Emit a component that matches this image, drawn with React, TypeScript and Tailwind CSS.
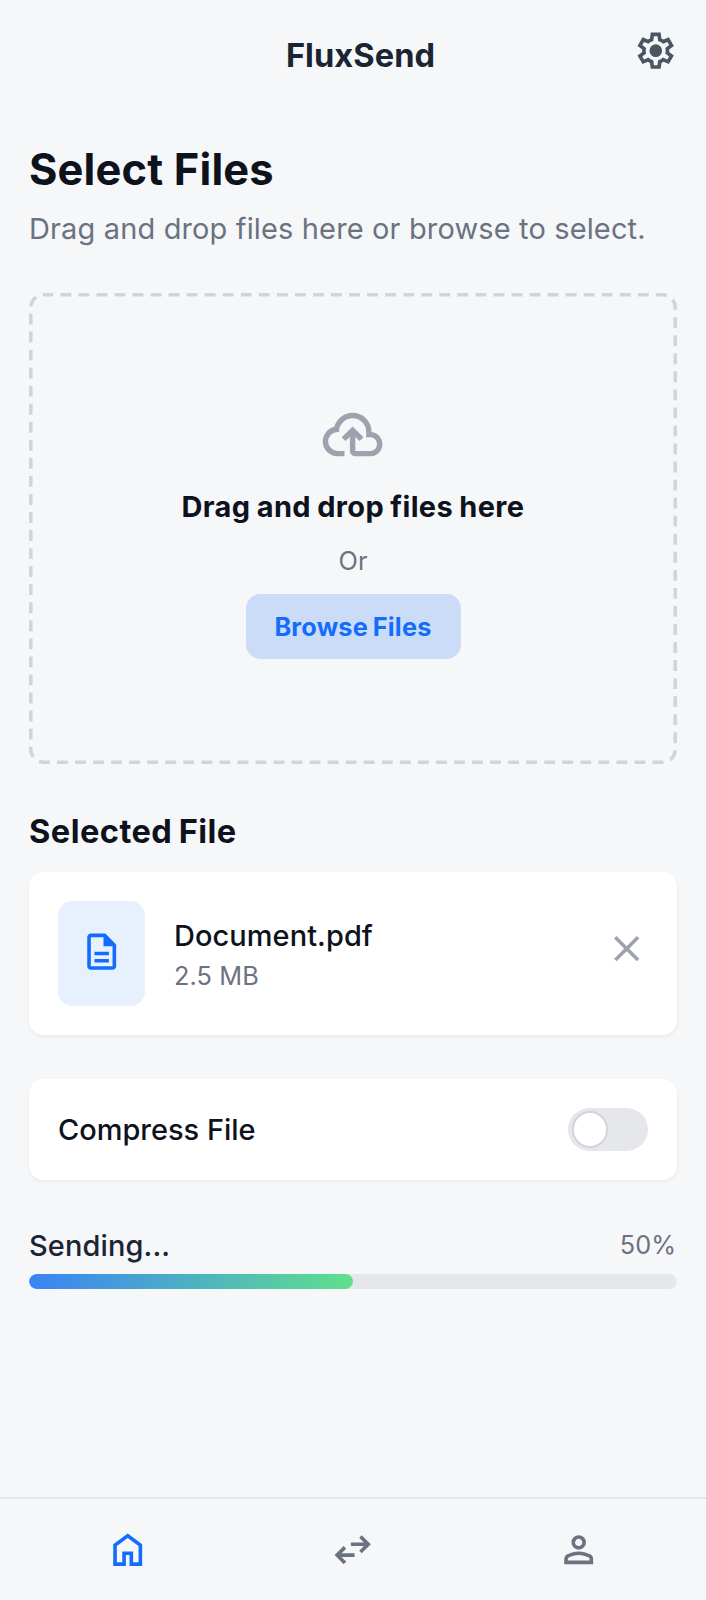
type IconProps = { path: string; className: string };

const icons = {
  settings:
    "m370-80-16-128q-13-5-24.5-12T307-235l-119 50L78-375l103-78q-1-7-1-13.5v-27q0-6.5 1-13.5L78-585l110-190 119 50q11-8 23-15t24-12l16-128h220l16 128q13 5 24.5 12t22.5 15l119-50 110 190-103 78q1 7 1 13.5v27q0 6.5-2 13.5l103 78-110 190-118-50q-11 8-23 15t-24 12L590-80H370Zm70-80h79l14-106q31-8 57.5-23.5T639-327l99 41 39-68-86-65q5-14 7-29.5t2-31.5q0-16-2-31.5t-7-29.5l86-65-39-68-99 42q-22-23-48.5-38.5T533-694l-13-106h-79l-14 106q-31 8-57.5 23.5T321-633l-99-41-39 68 86 64q-5 15-7 30t-2 32q0 16 2 31t7 30l-86 65 39 68 99-42q22 23 48.5 38.5T427-266l13 106Zm42-180q58 0 99-41t41-99q0-58-41-99t-99-41q-59 0-99.5 41T342-480q0 58 40.5 99t99.5 41Z",
  cloudUpload:
    "M260-160q-91 0-155.5-63T40-377q0-78 47-139t123-78q25-92 100-149t170-57q117 0 198.5 81.5T760-520q69 8 114.5 59.5T920-340q0 75-52.5 127.5T740-160H520q-33 0-56.5-23.5T440-240v-206l-64 62-56-56 160-160 160 160-56 56-64-62v206h220q42 0 71-29t29-71q0-42-29-71t-71-29h-60v-80q0-83-58.5-141.5T480-720q-83 0-141.5 58.5T280-520h-20q-58 0-99 41t-41 99q0 58 41 99t99 41h100v80H260Z",
  description:
    "M320-240h320v-80H320v80Zm0-160h320v-80H320v80ZM240-80q-33 0-56.5-23.5T160-160v-640q0-33 23.5-56.5T240-880h320l240 240v480q0 33-23.5 56.5T720-80H240Zm280-520v-200H240v640h480v-440H520Z",
  close:
    "m256-200-56-56 224-224-224-224 56-56 224 224 224-224 56 56-224 224 224 224-56 56-224-224-224 224Z",
  home: "M240-200h120v-240h240v240h120v-360L480-740 240-560v360Zm-80 80v-480l320-240 320 240v480H520v-240h-80v240H160Z",
  swap: "M280-160 80-360l200-200 56 57-103 103h287v80H233l104 103-57 57Zm400-240-56-57 103-103H440v-80h287L624-743l56-57 200 200-200 200Z",
  person:
    "M480-480q-66 0-113-47t-47-113q0-66 47-113t113-47q66 0 113 47t47 113q0 66-47 113t-113 47ZM160-160v-112q0-34 17.5-62.5T224-378q62-31 126-46.5T480-440q66 0 130 15.5T736-378q29 15 46.5 43.5T800-272v112H160Zm80-80h480v-32q0-11-5.5-20T700-306q-54-27-109-40.5T480-360q-56 0-111 13.5T260-306q-9 5-14.5 14t-5.5 20v32Zm240-320q33 0 56.5-23.5T560-640q0-33-23.5-56.5T480-720q-33 0-56.5 23.5T400-640q0 33 23.5 56.5T480-560Z",
};

function Icon({ path, className }: IconProps) {
  return (
    <svg viewBox="0 -960 960 960" fill="currentColor" className={className} aria-hidden="true">
      <path d={path} />
    </svg>
  );
}

function Header() {
  return (
    <header className="flex h-[94px] items-start px-[29px] pt-[29px]">
      <h1 className="flex-1 pl-[58.5px] text-center text-[32.6px] leading-[52px] font-bold tracking-[0.07px] text-[#1a2433]">
        FluxSend
      </h1>
      <button className="text-[#4b5563]" aria-label="Settings">
        <Icon path={icons.settings} className="size-[43.4px]" />
      </button>
    </header>
  );
}

function DropZone() {
  return (
    <section className="relative mt-[43px] flex h-[471px] flex-col items-center pt-[109px]">
      <svg className="absolute inset-0 size-full" fill="none" aria-hidden="true">
        <rect
          x="1.8"
          y="1.8"
          width="644.4"
          height="467.4"
          rx="12.7"
          stroke="#d1d5db"
          strokeWidth="3.6"
          strokeDasharray="10.86 7.188"
          strokeDashoffset="1.2"
        />
      </svg>
      <Icon path={icons.cloudUpload} className="size-[65.2px] text-[#9ca3af]" />
      <p className="mt-[18px] text-[28.96px] leading-[44px] font-bold tracking-[0.36px] [word-spacing:-0.9px] text-[#0d121c]">
        Drag and drop files here
      </p>
      <p className="mt-[14px] text-[25.3px] leading-[36px] text-[#6b7280]">Or</p>
      <button className="mt-[15px] ml-px h-[65px] w-[215px] rounded-[14.5px] bg-[#cbdcf8] pr-px text-[25.3px] leading-[65px] font-bold tracking-[0.2px] [word-spacing:-1.4px] text-[#136dfb]">
        Browse Files
      </button>
    </section>
  );
}

function FileCard() {
  return (
    <div className="mt-[17px] flex h-[163px] items-center gap-[29px] rounded-[14.5px] bg-white p-[29px] shadow-[0_2px_4px_rgba(0,0,0,0.05)]">
      <div className="flex h-[105px] w-[87px] items-center justify-center rounded-[14.5px] bg-[#e7f1fe] pb-[3px] text-[#136dfb]">
        <Icon path={icons.description} className="size-[43.4px]" />
      </div>
      <div className="flex-1 pt-[1px]">
        <p className="text-[28.96px] leading-[43px] font-medium tracking-[0.07px] text-[#0d121c]">Document.pdf</p>
        <p className="text-[25.3px] leading-[37px] tracking-[0.1px] text-[#6b7280]">2.5 MB</p>
      </div>
      <button className="pb-[10px] text-[#9ca3af]" aria-label="Remove file">
        <Icon path={icons.close} className="size-[43.4px]" />
      </button>
    </div>
  );
}

function CompressCard() {
  return (
    <div className="mt-[44px] flex h-[101px] items-center justify-between rounded-[14.5px] bg-white px-[29px] shadow-[0_2px_4px_rgba(0,0,0,0.05)]">
      <span className="text-[28.96px] leading-[43px] font-medium text-[#0d121c]">Compress File</span>
      <button
        role="switch"
        aria-checked="false"
        aria-label="Compress file"
        className="flex h-[43.4px] w-[79.6px] items-center rounded-full bg-[#e5e7eb] pl-[3.6px]"
      >
        <span className="size-[36.2px] rounded-full border-2 border-[#d1d5db] bg-white" />
      </button>
    </div>
  );
}

function Progress() {
  return (
    <section className="mt-[44px]">
      <div className="flex h-[43px] items-center justify-between pr-px">
        <span className="text-[28.96px] font-medium tracking-[0.12px] text-[#1a2433]">Sending...</span>
        <span className="pb-px text-[25.3px] text-[#6b7280]">50%</span>
      </div>
      <div className="mt-[7px] h-[14.5px] overflow-hidden rounded-full bg-[#e5e7eb]">
        <div className="h-full w-1/2 rounded-full bg-linear-to-r/srgb from-[#3b82f6] to-[#5fe08c]" />
      </div>
    </section>
  );
}

function BottomNav() {
  return (
    <nav className="mt-auto flex h-[103.4px] border-t-2 border-[#e5e7eb] px-[14.5px] pt-[29px] text-[#6b7280]">
      <a className="flex flex-1 justify-center text-[#136dfb]">
        <Icon path={icons.home} className="size-[43.4px]" />
      </a>
      <a className="flex flex-1 justify-center">
        <Icon path={icons.swap} className="size-[43.4px]" />
      </a>
      <a className="flex flex-1 justify-center">
        <Icon path={icons.person} className="size-[43.4px]" />
      </a>
    </nav>
  );
}

export default function App() {
  return (
    <div className="flex h-[1600px] w-[706px] flex-col bg-[#f6f7f9] font-['Inter',sans-serif]">
      <Header />
      <main className="px-[29px] pt-[47px]">
        <h2 className="pt-px text-[43.4px] leading-[55px] font-bold tracking-[0.18px] text-[#0d121c]">
          Select Files
        </h2>
        <p className="mt-[10px] text-[28.96px] leading-[43px] tracking-[0.16px] whitespace-nowrap text-[#6b7280]">
          Drag and drop files here or browse to select.
        </p>
        <DropZone />
        <h3 className="mt-[44px] text-[32.6px] leading-[47px] font-bold tracking-[0.45px] [word-spacing:-1.8px] text-[#0d121c]">
          Selected File
        </h3>
        <FileCard />
        <CompressCard />
        <Progress />
      </main>
      <BottomNav />
    </div>
  );
}
